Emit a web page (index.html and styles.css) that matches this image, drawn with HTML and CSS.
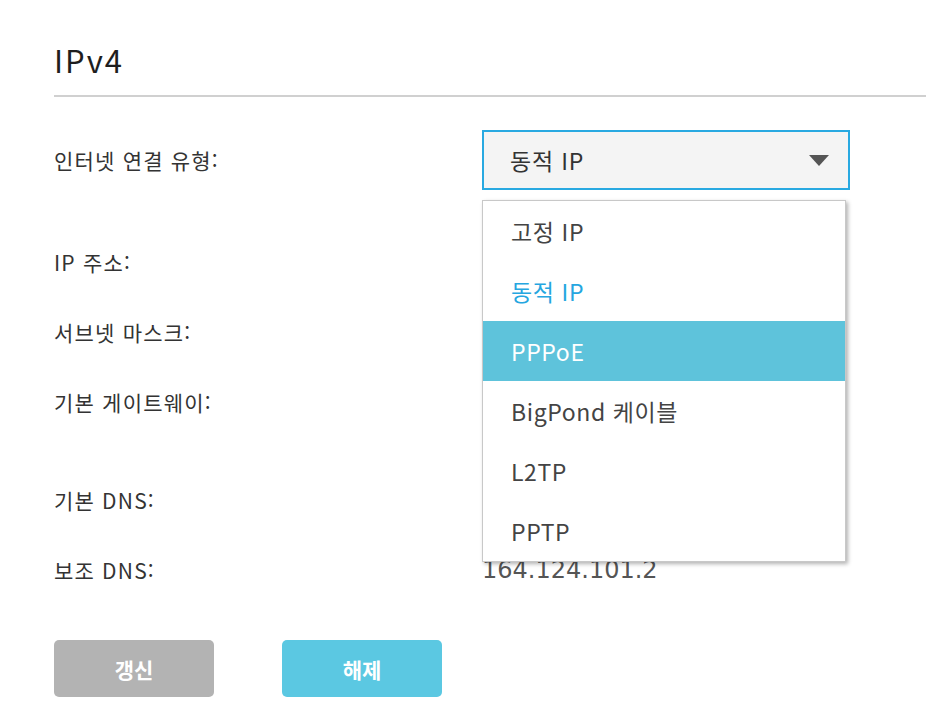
FILE: index.html
```html
<!DOCTYPE html>
<html lang="ko">
<head>
<meta charset="utf-8">
<title>IPv4</title>
<link rel="stylesheet" href="styles.css">
</head>
<body>
<section class="panel">
  <h2 class="title">IPv4</h2>
  <div class="divider"></div>
  <div class="form">
    <div class="row row-first">
      <div class="label">인터넷 연결 유형:</div>
      <div class="field">
        <div class="select">
          <span class="select-text">동적 IP</span>
          <svg class="caret" width="20" height="12" viewBox="0 0 20 12"><path d="M0 0 H20 L10 11 Z" fill="#555"/></svg>
        </div>
        <ul class="menu">
          <li class="item">고정 IP</li>
          <li class="item selected">동적 IP</li>
          <li class="item hover">PPPoE</li>
          <li class="item">BigPond 케이블</li>
          <li class="item">L2TP</li>
          <li class="item">PPTP</li>
        </ul>
      </div>
    </div>
    <div class="row row-ip">
      <div class="label">IP 주소:</div>
      <div class="value"></div>
    </div>
    <div class="row">
      <div class="label">서브넷 마스크:</div>
      <div class="value"></div>
    </div>
    <div class="row">
      <div class="label">기본 게이트웨이:</div>
      <div class="value"></div>
    </div>
    <div class="row row-dns">
      <div class="label">기본 DNS:</div>
      <div class="value"></div>
    </div>
    <div class="row">
      <div class="label">보조 DNS:</div>
      <div class="value">164.124.101.2</div>
    </div>
  </div>
  <div class="buttons">
    <button class="btn btn-gray">갱신</button>
    <button class="btn btn-blue">해제</button>
  </div>
</section>
</body>
</html>
```

FILE: styles.css
```css
* { box-sizing: border-box; }
html, body { margin: 0; padding: 0; background: #fff; }
body {
  font-family: "Noto Sans CJK KR", "Noto Sans", sans-serif;
  color: #444;
  width: 926px;
  height: 718px;
  overflow: hidden;
}
.panel {
  padding-left: 54px;
  padding-top: 40px;
}
.title {
  margin: 0;
  font-size: 31px;
  font-weight: 400;
  line-height: 40px;
  color: #1e1e1e;
  letter-spacing: 2px;
}
.divider {
  margin-top: 15px;
  height: 2px;
  background: #d0d0d0;
}
.form {
  margin-top: 33px;
}
.row {
  display: flex;
  align-items: center;
  height: 70px;
  font-size: 21px;
}
.row-first {
  height: 60px;
}
.row-ip {
  margin-top: 37px;
}
.row-dns {
  margin-top: 28px;
}
.label {
  width: 428px;
  flex: none;
  color: #333;
  letter-spacing: 1.2px;
}
.field {
  position: relative;
}
.select {
  width: 368px;
  height: 60px;
  border: 2px solid #29a9e1;
  background: #f4f4f4;
  display: flex;
  align-items: center;
  justify-content: space-between;
  padding: 0 19px 0 26px;
  color: #333;
  font-size: 23px;
  letter-spacing: 0.8px;
}
.caret { display: block; margin-top: 2px; }
.menu {
  position: absolute;
  top: 70px;
  left: 0;
  width: 364px;
  margin: 0;
  padding: 0;
  list-style: none;
  background: #fff;
  border: 1px solid #c8c8c8;
  box-shadow: 2px 2px 4px rgba(0, 0, 0, 0.3);
  z-index: 2;
  font-size: 23px;
  letter-spacing: 0.6px;
}
.item {
  height: 60px;
  display: flex;
  align-items: center;
  padding-left: 28px;
  color: #444;
}
.item.selected { color: #25a6e0; }
.item.hover { background: #5ec3db; color: #fff; }
.value {
  font-family: "DejaVu Sans", "Noto Sans CJK KR", sans-serif;
  font-size: 24px;
  color: #555;
}
.buttons {
  display: flex;
  gap: 68px;
  margin-top: 35px;
}
.btn {
  width: 160px;
  height: 57px;
  border: none;
  border-radius: 5px;
  font-family: "Noto Sans CJK KR", sans-serif;
  font-size: 21px;
  font-weight: 700;
  color: #fff;
  padding: 0;
}
.btn-gray { background: #b3b3b3; }
.btn-blue { background: #5bc8e2; }
```
